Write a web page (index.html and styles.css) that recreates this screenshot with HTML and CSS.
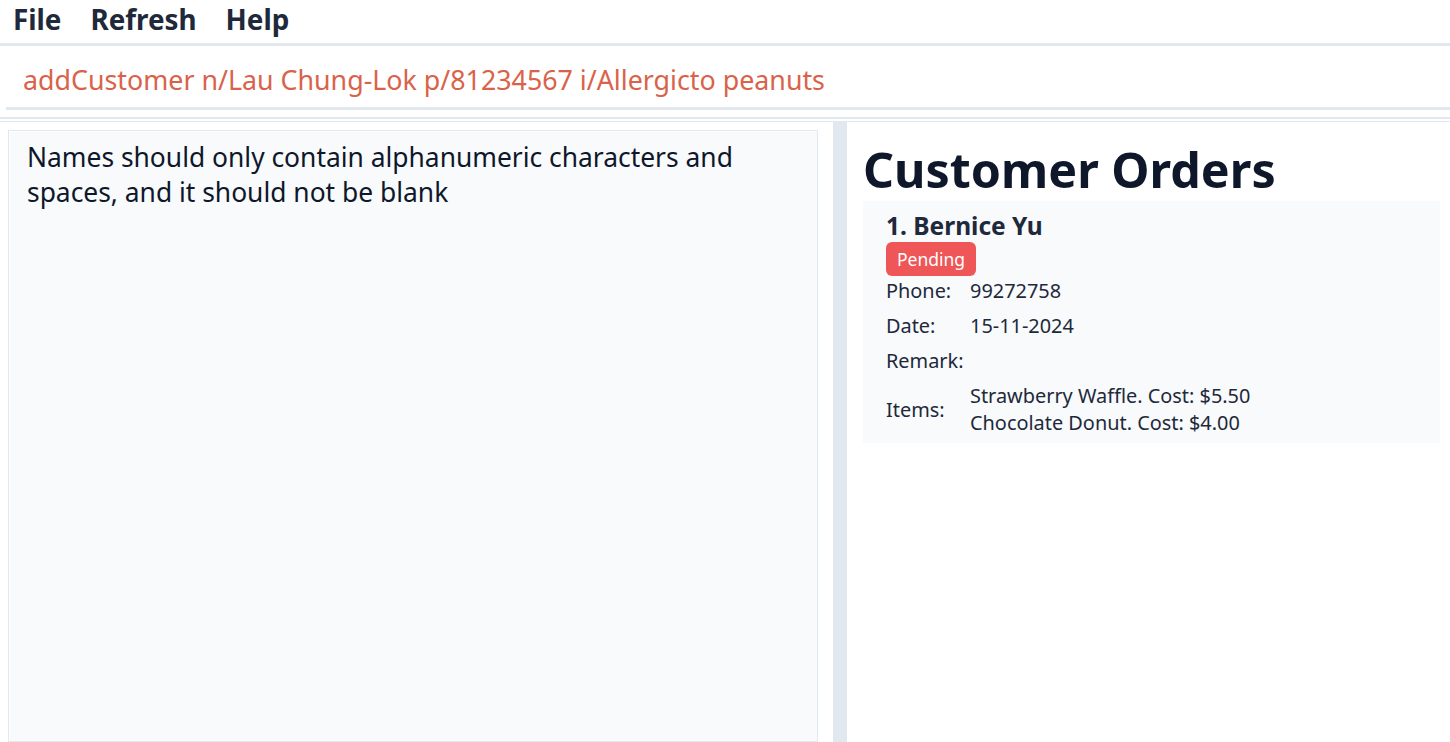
FILE: index.html
```html
<!DOCTYPE html>
<html>
<head>
<meta charset="utf-8">
<link rel="stylesheet" href="styles.css">
</head>
<body>
<div class="app">
  <nav class="menubar">
    <span class="menu-item">File</span>
    <span class="menu-item">Refresh</span>
    <span class="menu-item">Help</span>
  </nav>
  <div class="command">
    <div class="command-input">addCustomer n/Lau Chung-Lok p/81234567 i/Allergicto peanuts</div>
  </div>
  <div class="split-line"></div>
  <main class="main">
    <section class="left">
      <div class="result">Names should only contain alphanumeric characters and spaces, and it should not be blank</div>
    </section>
    <div class="divider"></div>
    <section class="right">
      <h1 class="title">Customer Orders</h1>
      <div class="card">
        <div class="card-name">1. Bernice Yu</div>
        <span class="badge">Pending</span>
        <div class="fields">
          <div class="label">Phone:</div><div class="value">99272758</div>
          <div class="label">Date:</div><div class="value">15-11-2024</div>
          <div class="label">Remark:</div><div class="value"></div>
          <div class="label">Items:</div>
          <div class="value items">
            <div>Strawberry Waffle. Cost: $5.50</div>
            <div>Chocolate Donut. Cost: $4.00</div>
          </div>
        </div>
      </div>
    </section>
  </main>
</div>
</body>
</html>
```
FILE: styles.css
```css
* { box-sizing: border-box; }
html, body { margin: 0; padding: 0; height: 100%; }
body {
  font-family: "Noto Sans", "Open Sans", sans-serif;
  background: #ffffff;
  color: #1e293b;
  overflow: hidden;
}
.app { display: flex; flex-direction: column; height: 742px; }
.menubar {
  display: flex;
  gap: 29px;
  height: 46px;
  padding-left: 13px;
  padding-bottom: 5px;
  align-items: center;
  border-bottom: 3px solid #e2e8f0;
}
.menu-item { font-weight: 700; font-size: 27.8px; line-height: 36px; color: #1e293b; }
.command { height: 64px; padding-left: 6px; }
.command-input {
  height: 64px;
  border-bottom: 3px solid #e2e8f0;
  padding-left: 17px;
  padding-top: 16px;
  font-size: 26.8px;
  line-height: 36px;
  color: #d9634a;
  white-space: nowrap;
}
.split-line {
  margin-top: 7px;
  height: 5px;
  border-top: 2px solid #e2e8f0;
  border-bottom: 1px solid #e2e8f0;
}
.main { flex: 1; display: flex; min-height: 0; }
.left { width: 833px; padding: 8px 15px 0 8px; }
.result {
  height: 100%;
  background: #f8fafc;
  border: 1px solid #e2e8f0;
  box-shadow: inset 1px 1px 0 #ffffff;
  padding: 9px 18px;
  font-size: 26.4px;
  line-height: 35px;
  color: #0f172a;
}
.divider { width: 14px; background: #e2e8f0; }
.right { flex: 1; padding: 15px 10px 0 16px; }
.title {
  margin: 0;
  font-size: 48.4px;
  line-height: 64px;
  font-weight: 700;
  color: #0f172a;
}
.card {
  background: #f8fafc;
  padding: 9px 23px 3px 23px;
}
.card-name { font-size: 24.5px; font-weight: 700; line-height: 32px; color: #1e293b; }
.badge {
  display: inline-block;
  background: #ef5658;
  color: #ffffff;
  font-size: 17.5px;
  line-height: 34px;
  padding: 0 11px;
  border-radius: 6px;
  vertical-align: top;
}
.fields {
  display: grid;
  grid-template-columns: 84px 1fr;
  font-size: 19.9px;
  color: #1e293b;
  align-items: center;
  margin-top: -3px;
}
.label, .value { min-height: 35px; display: flex; align-items: center; }
.items { display: block; line-height: 27px; padding: 4px 0; }
```
